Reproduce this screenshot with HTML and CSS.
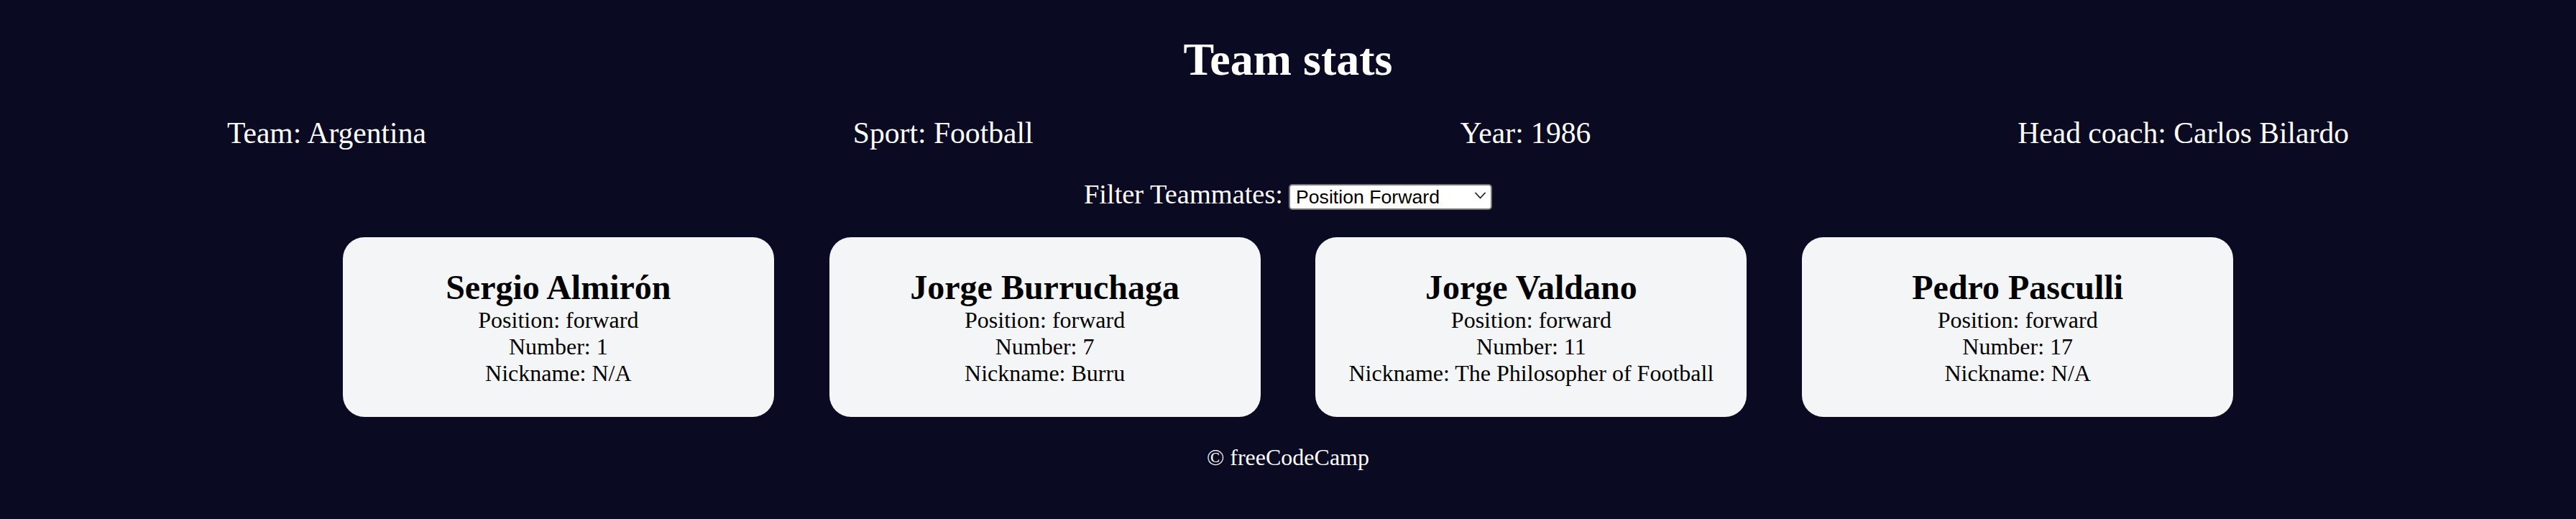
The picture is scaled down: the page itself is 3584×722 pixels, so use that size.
FILE: index.html
```html
<!DOCTYPE html>
<html lang="en">
<head>
<meta charset="UTF-8">
<title>Team stats</title>
<link rel="stylesheet" href="styles.css">
</head>
<body>
  <header class="title-container">
    <h1 class="title">Team stats</h1>
    <div class="team-stats">
      <p class="stat">Team: <span id="team">Argentina</span></p>
      <p class="stat">Sport: <span id="sport">Football</span></p>
      <p class="stat">Year: <span id="year">1986</span></p>
      <p class="stat">Head coach: <span id="head-coach">Carlos Bilardo</span></p>
    </div>
  </header>
  <main>
    <div class="filter-row">
      <label class="options-label" for="players">Filter Teammates:</label>
      <span class="select-wrap"><select class="players-select" name="players" id="players">
          <option value="all">All Players</option>
          <option value="nickname">Nicknames</option>
          <option value="forward" selected>Position Forward</option>
          <option value="midfielder">Position Midfielder</option>
          <option value="defender">Position Defender</option>
          <option value="goalkeeper">Position Goalkeeper</option>
        </select><svg class="chevron" viewBox="0 0 15 10" aria-hidden="true"><path d="M1 1.5 L7.5 8.5 L14 1.5" fill="none" stroke="#222" stroke-width="1.8" stroke-linecap="round" stroke-linejoin="round"/></svg></span>
    </div>
    <div class="cards" id="player-cards">
      <div class="player-card">
        <h2 class="player-name">Sergio Almirón</h2>
        <p>Position: forward</p>
        <p>Number: 1</p>
        <p>Nickname: N/A</p>
      </div>
      <div class="player-card">
        <h2 class="player-name">Jorge Burruchaga</h2>
        <p>Position: forward</p>
        <p>Number: 7</p>
        <p>Nickname: Burru</p>
      </div>
      <div class="player-card">
        <h2 class="player-name">Jorge Valdano</h2>
        <p>Position: forward</p>
        <p>Number: 11</p>
        <p>Nickname: The Philosopher of Football</p>
      </div>
      <div class="player-card">
        <h2 class="player-name">Pedro Pasculli</h2>
        <p>Position: forward</p>
        <p>Number: 17</p>
        <p>Nickname: N/A</p>
      </div>
    </div>
  </main>
  <footer class="footer">&copy; freeCodeCamp</footer>
</body>
</html>
```

FILE: styles.css
```css
*,
*::before,
*::after {
  box-sizing: border-box;
}

body {
  margin: 0;
  padding: 0 19px;
  background-color: #0a0a23;
  color: #ffffff;
  font-family: "Liberation Serif", "Times New Roman", serif;
  font-size: 32px;
  text-align: center;
}

.title {
  font-size: 64px;
  font-weight: bold;
  margin: 46px 0 0;
}

.team-stats {
  display: flex;
  justify-content: space-around;
  flex-wrap: wrap;
  font-size: 41.6px;
  margin: 41px 0 39px;
}

.stat {
  margin: 0;
}

.filter-row {
  margin: 0;
}

.options-label {
  font-size: 38.4px;
}

.select-wrap {
  position: relative;
  display: inline-block;
}

.players-select {
  appearance: none;
  -webkit-appearance: none;
  width: 283px;
  height: 36px;
  margin: 0;
  padding: 0 8px;
  border: 2px solid #767676;
  border-radius: 5px;
  background-color: #ffffff;
  color: #000000;
  font-family: "Liberation Sans", Arial, sans-serif;
  font-size: 26.67px;
}

.chevron {
  position: absolute;
  right: 9px;
  top: 13px;
  width: 15px;
  height: 10px;
  pointer-events: none;
}

.cards {
  display: flex;
  justify-content: center;
  flex-wrap: wrap;
}

.player-card {
  width: 600px;
  padding: 41.6px;
  margin: 38.4px;
  background-color: #f4f5f7;
  color: #000000;
  border-radius: 30px;
}

.player-name {
  font-size: 48px;
  margin: 0;
}

.player-card p {
  margin: 0;
}

.footer {
  font-size: 32px;
}
```
